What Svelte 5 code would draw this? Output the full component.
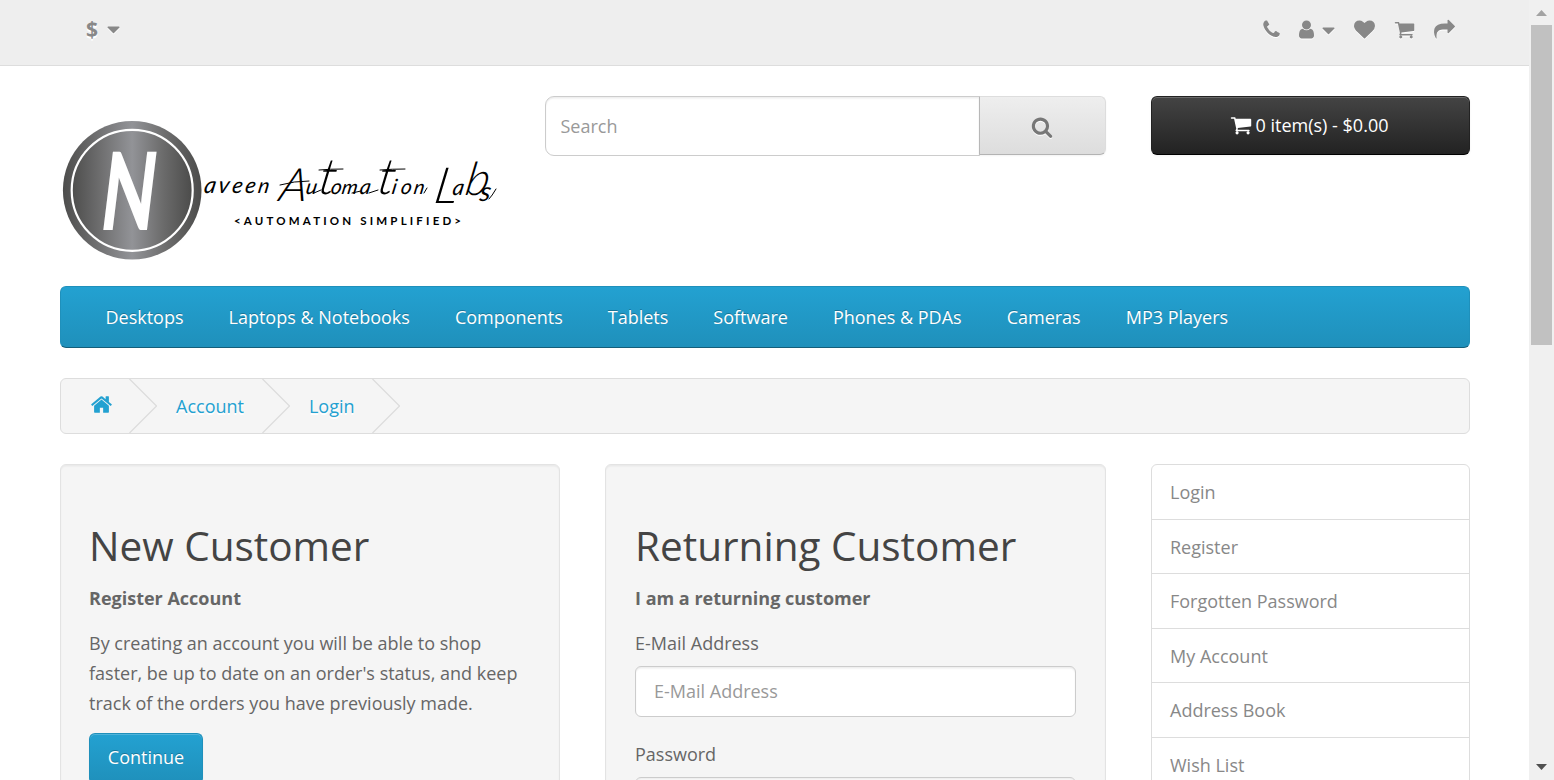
<script>
  const icons = {
    phone: 'M1600 1240q0 27-10 70.5t-21 68.5q-21 50-122 106-94 51-186 51-27 0-53-3.5t-57.5-12.5-47-14.5-55.5-20.5-49-18q-98-35-175-83-127-79-264-216t-216-264q-48-77-83-175-3-9-18-49t-20.5-55.5-14.5-47-12.5-57.5-3.5-53q0-92 51-186 56-101 106-122 25-11 68.5-21t70.5-10q14 0 21 3 18 6 53 76 11 19 30 54t35 63.5 31 53.5q3 4 17.5 25t21.5 35.5 7 28.5q0 20-28.5 50t-62 55-62 53-28.5 46q0 9 5 22.5t8.5 20.5 14 24 11.5 19q76 137 174 235t235 174q2 1 19 11.5t24 14 20.5 8.5 22.5 5q18 0 46-28.5t53-62 55-62 50-28.5q14 0 28.5 7t35.5 21.5 25 17.5q25 15 53.5 31t63.5 35 54 30q70 35 76 53 3 7 3 21z',
    user: 'M1536 1399q0 109-62.5 187t-150.5 78h-854q-88 0-150.5-78t-62.5-187q0-85 8.5-160.5t31.5-152 58.5-131 94-89 134.5-34.5q131 128 313 128t313-128q76 0 134.5 34.5t94 89 58.5 131 31.5 152 8.5 160.5zm-256-887q0 159-112.5 271.5t-271.5 112.5-271.5-112.5-112.5-271.5 112.5-271.5 271.5-112.5 271.5 112.5 112.5 271.5z',
    heart: 'M896 1664q-26 0-44-18l-624-602q-10-8-27.5-26t-55.5-65.5-68-97.5-53.5-121-23.5-138q0-220 127-344t351-124q62 0 126.5 21.5t120 58 95.5 68.5 76 68q36-36 76-68t95.5-68.5 120-58 126.5-21.5q224 0 351 124t127 344q0 221-229 450l-623 600q-18 18-44 18z',
    cart: 'M704 1536q0 52-38 90t-90 38-90-38-38-90 38-90 90-38 90 38 38 90zm896 0q0 52-38 90t-90 38-90-38-38-90 38-90 90-38 90 38 38 90zm128-1088v512q0 24-16.5 42.5t-40.5 21.5l-1044 122q13 60 13 70 0 16-24 64h920q26 0 45 19t19 45-19 45-45 19h-1024q-26 0-45-19t-19-45q0-11 8-31.5t16-36 21.5-40 15.5-29.5l-177-823h-204q-26 0-45-19t-19-45 19-45 45-19h256q16 0 28.5 6.5t19.5 15.5 13 24.5 8 26 5.5 29.5 4.5 26h1201q26 0 45 19t19 45z',
    share: 'M1792 640q0 26-19 45l-512 512q-19 19-45 19t-45-19-19-45v-256h-224q-98 0-175.5 6t-154 21.5-133 42.5-105.5 69.5-80 101-48.5 138.5-17.5 181q0 55 5 123 0 6 2.5 23.5t2.5 26.5q0 15-8.5 25t-23.5 10q-16 0-28-17-7-9-13-22t-13.5-30-10.5-24q-127-285-127-451 0-199 53-333 162-403 875-403h224v-256q0-26 19-45t45-19 45 19l512 512q19 19 19 45z',
    search: 'M1216 832q0-185-131.5-316.5t-316.5-131.5-316.5 131.5-131.5 316.5 131.5 316.5 316.5 131.5 316.5-131.5 131.5-316.5zm512 832q0 52-38 90t-90 38q-54 0-90-38l-343-342q-179 124-399 124-143 0-273.5-55.5t-225-150-150-225-55.5-273.5 55.5-273.5 150-225 225-150 273.5-55.5 273.5 55.5 225 150 150 225 55.5 273.5q0 220-124 399l343 343q37 37 37 90z',
    home: 'M1472 992v480q0 26-19 45t-45 19h-384v-384h-256v384h-384q-26 0-45-19t-19-45v-480q0-1 .5-3t.5-3l575-474 575 474q1 2 1 6zm223-69l-62 74q-8 9-21 11h-3q-13 0-21-7l-692-577-692 577q-12 8-24 7-13-2-21-11l-62-74q-8-10-7-23.5t11-21.5l719-599q32-26 76-26t76 26l244 204v-195q0-14 9-23t23-9h192q14 0 23 9t9 23v408l219 182q10 8 11 21.5t-7 23.5z',
    caret: 'M1408 704q0 26-19 45l-448 448q-19 19-45 19t-45-19l-448-448q-19-19-19-45t19-45 45-19h896q26 0 45 19t19 45z'
  };

  const categories = ['Desktops', 'Laptops & Notebooks', 'Components', 'Tablets', 'Software', 'Phones & PDAs', 'Cameras', 'MP3 Players'];
  const accountLinks = ['Login', 'Register', 'Forgotten Password', 'My Account', 'Address Book', 'Wish List'];

  // Wordmark words; each letter is character, x, baseline, font size
  const words = [
    [['a', 143, 74, 23], ['v', 157, 74, 23], ['e', 171, 74, 22], ['e', 184, 74, 22], ['n', 197, 74, 21]],
    [['A', 219, 82, 46], ['u', 245, 75, 21], ['t', 257, 75, 50], ['o', 270, 75, 21], ['m', 281, 75, 20], ['a', 299, 75, 21], ['t', 316, 75, 50], ['i', 331, 75, 21], ['o', 340, 75, 21], ['n', 353, 75, 20]],
    [['L', 374, 84, 50], ['a', 392, 76, 22], ['b', 404, 76, 46], ['s', 420, 82, 27]]
  ];
</script>

{#snippet icon(name, cls = '')}
  <svg class="icon {cls}" viewBox="0 0 1792 1792" aria-hidden="true"><path d={icons[name]} /></svg>
{/snippet}

{#snippet chevron()}
  <svg class="chevron" viewBox="0 0 28 54" aria-hidden="true"><path d="M0.5 0L27.5 27L0.5 54" /></svg>
{/snippet}

<div class="window">
  <div class="page">
    <nav class="top">
      <div class="currency"><strong>$</strong>{@render icon('caret')}</div>
      <div class="links">
        {@render icon('phone')}
        <span class="account">{@render icon('user')}{@render icon('caret', 'low')}</span>
        {@render icon('heart')}
        {@render icon('cart')}
        {@render icon('share')}
      </div>
    </nav>

    <div class="container">
      <header class="columns">
        <svg class="logo" viewBox="0 0 440 144" role="img" aria-label="Naveen Automation Labs">
          <defs>
            <linearGradient id="metal">
              <stop offset="0" stop-color="#4d4d4c" />
              <stop offset="0.25" stop-color="#707071" />
              <stop offset="0.5" stop-color="#929397" />
              <stop offset="0.75" stop-color="#6c6c6c" />
              <stop offset="1" stop-color="#4b4b4a" />
            </linearGradient>
          </defs>
          <circle cx="72.2" cy="71.3" r="69.3" fill="url(#metal)" />
          <circle cx="72.2" cy="71.3" r="60.5" fill="url(#metal)" stroke="#fff" stroke-width="2.2" />
          <text class="initial" transform="translate(38 111) skewX(-7) scale(.65 1)">N</text>
          <g transform="translate(13.2 0) skewX(-10)">
            {#each words as word}
              <text class="script">{#each word as [ch, x, y, size]}<tspan class:small={size < 30} {x} {y} font-size={size}>{ch}</tspan>{/each}</text>
            {/each}
          </g>
          <path class="swash" d="M220 66q14-4 29-4M259 51q11-1 24-1M320 51q12-1 25-1M254 74l7-3M292 74l9-2M309 74l9-3M364 74l3-5M429 80q3-3 7-10" />
          <text class="tagline" x="174" y="106" textLength="227">&lt;AUTOMATION SIMPLIFIED&gt;</text>
        </svg>
        <div class="search">
          <input type="text" placeholder="Search" />
          <button aria-label="Search">{@render icon('search')}</button>
        </div>
        <button class="basket">{@render icon('cart')}<span>0 item(s) - $0.00</span></button>
      </header>

      <nav class="menu">
        {#each categories as category}<span>{category}</span>{/each}
      </nav>

      <div class="breadcrumb">
        {@render icon('home')}
        {@render chevron()}
        <span>Account</span>
        {@render chevron()}
        <span>Login</span>
        {@render chevron()}
      </div>

      <main class="columns">
        <section class="well">
          <h2>New Customer</h2>
          <p><strong>Register Account</strong></p>
          <p class="intro">By creating an account you will be able to shop faster, be up to date on an order's status, and keep track of the orders you have previously made.</p>
          <button class="primary">Continue</button>
        </section>
        <section class="well">
          <h2>Returning Customer</h2>
          <p><strong>I am a returning customer</strong></p>
          <label for="email">E-Mail Address</label>
          <input id="email" type="text" placeholder="E-Mail Address" />
          <label for="password">Password</label>
          <input id="password" type="password" placeholder="Password" />
        </section>
        <aside class="list">
          {#each accountLinks as link}<span>{link}</span>{/each}
        </aside>
      </main>
    </div>
  </div>

  <div class="scrollbar">
    <svg viewBox="0 0 25 25"><path fill="#a3a3a3" d="M7 16h11l-5.5-6z" /></svg>
    <div class="thumb"></div>
    <svg class="end" viewBox="0 0 25 25"><path fill="#505050" d="M7 9h11l-5.5 6z" /></svg>
  </div>
</div>

<style>
  :global(body) { margin: 0; overflow: hidden; }
  * { box-sizing: border-box; }
  .window {
    display: flex;
    height: 780px;
    overflow: hidden;
    background: #fff;
    color: #666;
    font: 400 18px/30px 'Open Sans', sans-serif;
  }
  .page { width: 1529px; height: 780px; overflow: hidden; }
  .icon { display: block; flex: none; width: 21px; height: 21px; fill: currentColor; overflow: visible; }
  button, input { font: inherit; margin: 0; }

  .top {
    display: flex;
    justify-content: space-between;
    height: 66px;
    padding: 19px 74.5px 0 86px;
    background: #eee;
    border-bottom: 1px solid #ddd;
    color: #888;
    text-shadow: 0 1.5px 0 #fff;
  }
  .top .icon { filter: drop-shadow(0 1.5px 0 #fff); }
  .currency { display: flex; height: 21px; line-height: 21px; gap: 6px; }
  .currency strong { width: 11px; font-size: 21px; }
  .links { display: flex; }
  .account { display: flex; margin: 0 15px 0 14px; }
  .account .low { margin: 1px 0 0 1px; }
  .links > .icon:nth-of-type(n + 2) { margin-right: 19px; }
  .links > .icon:last-child { margin-right: 0; }

  .container { width: 1410px; margin-left: 60px; }
  .columns { display: grid; grid-template-columns: 500px 501px 319px; column-gap: 45px; }
  header.columns { grid-template-columns: 440px 561px 319px; height: 220px; padding-top: 30px; align-items: start; }
  .logo { width: 440px; height: 144px; margin-top: 23px; }
  .initial { font: 900 108px Lato, sans-serif; fill: #fff; }
  .script { font-family: Lato, sans-serif; font-style: italic; font-weight: 300; fill: #000; }
  .script .small { font-weight: 400; }
  .swash { fill: none; stroke: #000; stroke-width: 1; stroke-linecap: round; }
  .tagline { font: 700 11.5px Lato, sans-serif; fill: #000; }

  input {
    display: block;
    border: 1px solid #ccc;
    background: #fff;
    box-shadow: inset 0 1.5px 1.5px rgba(0, 0, 0, 0.075);
    color: #555;
    outline: 0;
  }
  input::placeholder { color: #999; opacity: 1; }
  .search { display: flex; align-items: flex-start; }
  .search input { width: 435px; height: 60px; padding: 0 14.5px; border-radius: 9px 0 0 9px; }
  .search button {
    display: grid;
    place-items: center;
    width: 127px;
    height: 59px;
    margin-left: -1px;
    padding: 2px 1px 0 0;
    border: 1px solid;
    border-color: #ddd #ddd #b3b3b3 #b7b7b7;
    border-radius: 0 6px 6px 0;
    background: linear-gradient(#eee, #ddd);
    color: #777;
    box-shadow: 0 1px 2px rgba(0, 0, 0, 0.05);
  }
  .search .icon { width: 22px; height: 22px; filter: drop-shadow(0 1.5px 0 #fff); }
  .basket {
    display: flex;
    align-items: center;
    justify-content: center;
    gap: 4px;
    height: 59px;
    padding: 0 3px 2px 0;
    border: 1px solid;
    border-color: #222 #222 #000;
    border-radius: 6px;
    background: linear-gradient(#444, #222);
    box-shadow: inset 0 1px 0 rgba(255, 255, 255, 0.2), 0 1px 3px rgba(0, 0, 0, 0.05);
    color: #fff;
  }
  .basket .icon { width: 22px; height: 22px; }

  .menu {
    display: flex;
    gap: 45px;
    height: 62px;
    padding: 0 44.5px;
    border: 1px solid;
    border-color: #1f90bb #1f90bb #145e7a;
    border-radius: 6px;
    background: linear-gradient(#23a1d1, #1f90bb);
    color: #fff;
    line-height: 61px;
    text-shadow: 0 -1px 0 rgba(0, 0, 0, 0.25);
    white-space: nowrap;
  }
  .breadcrumb {
    display: flex;
    align-items: flex-start;
    height: 56px;
    margin-top: 30px;
    padding-left: 30px;
    border: 1px solid #ddd;
    border-radius: 6px;
    background: #f5f5f5;
    color: #23a1d1;
    line-height: 54px;
    text-shadow: 0 1.5px 0 #fff;
  }
  .breadcrumb .icon { width: 23px; height: 23px; margin: 14px 16px 0 -1px; }
  .breadcrumb span { margin: 0 18px 0 19px; }
  .breadcrumb span:last-of-type { margin-right: 17px; }
  .chevron { width: 28px; height: 54px; flex: none; fill: none; stroke: #ddd; stroke-width: 1.4; }

  main { margin-top: 30px; }
  .well {
    height: 620px;
    padding: 58px 29px 28px 28px;
    border: 1px solid #e3e3e3;
    border-radius: 6px;
    background: #f5f5f5;
    box-shadow: inset 0 1.5px 1.5px rgba(0, 0, 0, 0.05);
  }
  .well + .well { padding-left: 29px; }
  h2 { margin: 0 0 15px; color: #444; font-size: 40.5px; font-weight: 400; line-height: 45px; white-space: nowrap; }
  p { margin: 0 0 15px; }
  .primary {
    width: 114px;
    height: 51px;
    padding: 0 0 3px;
    border: 1px solid;
    border-color: #1f90bb #1f90bb #145e7a;
    border-radius: 6px;
    background: linear-gradient(#23a1d1, #1f90bb);
    box-shadow: inset 0 1px 0 rgba(255, 255, 255, 0.2), 0 1px 2px rgba(0, 0, 0, 0.05);
    color: #fff;
    text-shadow: 0 -1px 0 rgba(0, 0, 0, 0.25);
  }
  label { display: block; height: 30px; margin-bottom: 8px; }
  .well input { width: 441px; height: 51px; margin-bottom: 22px; padding: 0 18px 2px; border-radius: 6px; }
  .list { height: 620px; border: 1px solid #ddd; border-radius: 6px; color: #888; }
  .list span { display: block; height: 54.5px; padding-left: 18px; border-bottom: 1px solid #ddd; line-height: 55px; }

  .scrollbar { display: flex; flex-direction: column; width: 25px; background: #f0f0f0; }
  .scrollbar svg { width: 25px; height: 25px; flex: none; }
  .thumb { height: 320px; margin: 0 2px; background: #c1c1c1; }
  .scrollbar .end { margin-top: auto; }
</style>
